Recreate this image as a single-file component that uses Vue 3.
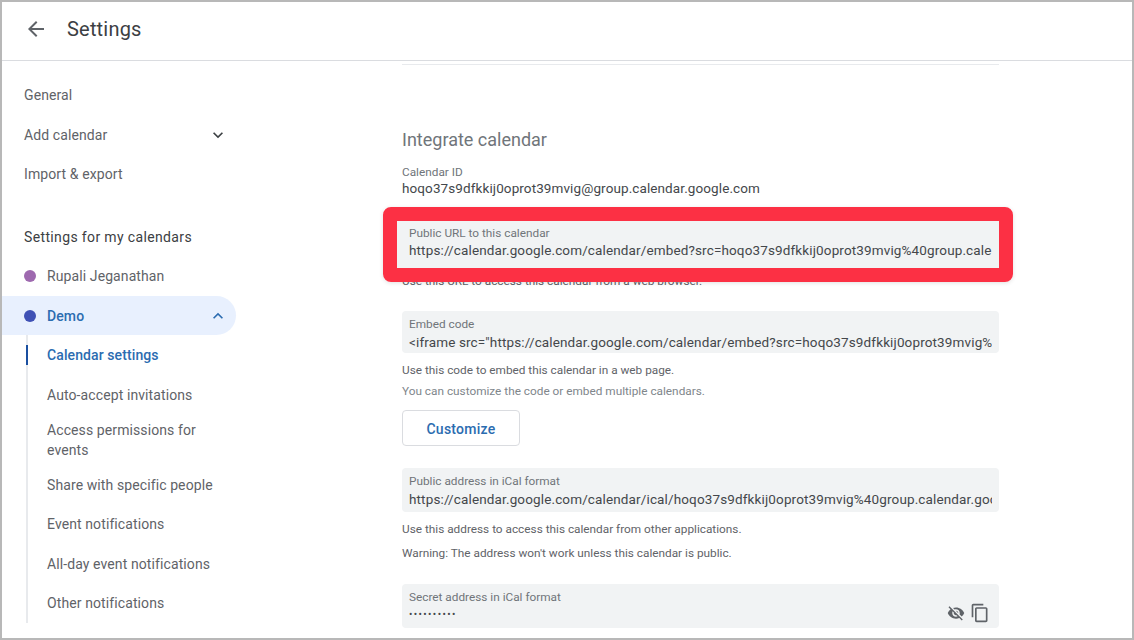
<script setup>
const topNav = ['General', 'Add calendar', 'Import & export']
const subNav = [
  { label: 'Calendar settings', active: true },
  { label: 'Auto-accept invitations' },
  { label: 'Access permissions for events', tall: true },
  { label: 'Share with specific people' },
  { label: 'Event notifications' },
  { label: 'All-day event notifications' },
  { label: 'Other notifications' }
]
</script>

<template>
  <div class="frame">
    <header class="bar">
      <svg class="back" width="24" height="24" viewBox="0 0 24 24" fill="#5f6368"><path d="M20 11H7.83l5.59-5.59L12 4l-8 8 8 8 1.41-1.41L7.83 13H20v-2z"/></svg>
      <h1>Settings</h1>
    </header>
    <div class="body">
      <nav class="side">
        <div v-for="item in topNav" :key="item" class="item">
          <span>{{ item }}</span>
          <svg v-if="item === 'Add calendar'" class="chev" width="20" height="20" viewBox="0 0 24 24" fill="#3c4043"><path d="M7.41 8.59 12 13.17l4.59-4.58L18 10l-6 6-6-6z"/></svg>
        </div>
        <div class="item head">Settings for my calendars</div>
        <div class="item"><i class="dot purple"></i><span>Rupali Jeganathan</span></div>
        <div class="item demo">
          <i class="dot blue"></i><span>Demo</span>
          <svg class="chev" width="20" height="20" viewBox="0 0 24 24" fill="#2b6cb0"><path d="M7.41 15.41 12 10.83l4.59 4.58L18 14l-6-6-6 6z"/></svg>
        </div>
        <div class="sub">
          <div v-for="s in subNav" :key="s.label" class="subitem" :class="{ active: s.active, tall: s.tall }">{{ s.label }}</div>
        </div>
      </nav>
      <main class="main">
        <div class="rule"></div>
        <h2>Integrate calendar</h2>
        <div class="plain">
          <div class="label">Calendar ID</div>
          <div class="value">hoqo37s9dfkkij0oprot39mvig@group.calendar.google.com</div>
        </div>
        <div class="field url">
          <div class="label">Public URL to this calendar</div>
          <div class="value clip">https://calendar.google.com/calendar/embed?src=hoqo37s9dfkkij0oprot39mvig%40group.cale</div>
        </div>
        <p class="help first">Use this URL to access this calendar from a web browser.</p>
        <div class="field embed">
          <div class="label">Embed code</div>
          <div class="value clip">&lt;iframe src="https://calendar.google.com/calendar/embed?src=hoqo37s9dfkkij0oprot39mvig%</div>
        </div>
        <p class="help use">Use this code to embed this calendar in a web page.</p>
        <p class="help muted">You can customize the code or embed multiple calendars.</p>
        <button class="btn">Customize</button>
        <div class="field ical">
          <div class="label">Public address in iCal format</div>
          <div class="value clip">https://calendar.google.com/calendar/ical/hoqo37s9dfkkij0oprot39mvig%40group.calendar.goo</div>
        </div>
        <p class="help use">Use this address to access this calendar from other applications.</p>
        <p class="help warn">Warning: The address won't work unless this calendar is public.</p>
        <div class="field secret">
          <div class="label">Secret address in iCal format</div>
          <div class="value dots">••••••••••</div>
          <div class="tools">
            <svg width="18" height="18" viewBox="0 0 24 24" fill="#5f6368"><path d="M12 7c2.76 0 5 2.24 5 5 0 .65-.13 1.26-.36 1.83l2.92 2.92c1.51-1.26 2.7-2.89 3.43-4.75-1.73-4.39-6-7.5-11-7.5-1.4 0-2.74.25-3.98.7l2.16 2.16C10.74 7.13 11.35 7 12 7zM2 4.270l2.280 2.280.46.46C3.080 8.300 1.780 10.020 1 12c1.730 4.390 6 7.500 11 7.500 1.550 0 3.030-.3 4.380-.84l.42.42L19.730 22 21 20.730 3.270 3 2 4.270zM7.530 9.800l1.550 1.550c-.05.21-.08.43-.08.65 0 1.660 1.340 3 3 3 .22 0 .44-.03.65-.08l1.550 1.550c-.67.33-1.410.53-2.200.53-2.760 0-5-2.240-5-5 0-.79.2-1.530.53-2.200zm4.310-.78l3.150 3.150.02-.16c0-1.660-1.340-3-3-3l-.17.01z"/></svg>
            <svg width="20" height="20" viewBox="0 0 24 24" fill="#5f6368"><path d="M16 1H4c-1.100 0-2 .9-2 2v14h2V3h12V1zm3 4H8c-1.100 0-2 .9-2 2v14c0 1.100.9 2 2 2h11c1.100 0 2-.9 2-2V7c0-1.100-.9-2-2-2zm0 16H8V7h11v14z"/></svg>
          </div>
        </div>
      </main>
    </div>
    <div class="highlight"></div>
  </div>
</template>

<style>
html, body { margin: 0; background: #fff; }
</style>

<style scoped>
.frame { position: relative; box-sizing: border-box; width: 1134px; height: 640px; border: 2px solid #b8b8b8; overflow: hidden; display: flex; flex-direction: column; background: #fff; font-family: Roboto, "Liberation Sans", sans-serif; color: #5f6368; }
.bar { flex: none; box-sizing: border-box; height: 59px; border-bottom: 1px solid #dadce0; display: flex; align-items: center; padding: 0 0 4px 22px; }
.back { flex: none; }
h1 { margin: 0 0 0 19px; font: 400 20px Roboto, sans-serif; color: #3c4043; letter-spacing: .2px; }
.body { flex: 1; display: flex; min-height: 0; }
.side { flex: none; width: 400px; padding-top: 14.6px; box-sizing: border-box; font-size: 14px; letter-spacing: .1px; }
.item { box-sizing: border-box; height: 39.4px; width: 234px; display: flex; align-items: center; padding-left: 22px; position: relative; }
.head { margin-top: 23.5px; color: #3c4043; letter-spacing: .36px; }
.dot { flex: none; width: 12px; height: 12px; border-radius: 50%; margin-right: 11px; }
.purple { background: #9e69af; }
.blue { background: #3f51b5; }
.chev { position: absolute; right: 8px; top: 10px; }
.demo { background: #e8f0fe; border-radius: 0 20px 20px 0; color: #2b6cb0; font-weight: 500; }
.sub { margin-left: 24px; border-left: 2px solid #e8eaed; padding-left: 19px; width: 190px; }
.subitem { box-sizing: border-box; min-height: 39.4px; display: flex; align-items: center; line-height: 20px; position: relative; }
.tall { padding: 5.5px 0; }
.active { color: #2b6cb0; font-weight: 500; }
.active::before { content: ""; position: absolute; left: -21px; top: 10px; width: 1.5px; height: 20px; background: #1a4fa0; }
.main { flex: none; width: 597px; }
.rule { height: 1px; background: #e8eaed; margin-top: 3px; }
h2 { margin: 62.5px 0 0; font: 400 18px/24px Roboto, sans-serif; color: #70757a; }
.plain { margin-top: 12.5px; }
.plain .value { margin-top: -1.5px; }
.label { font-size: 11.8px; line-height: 16px; color: #70757a; }
.value { font-size: 13.5px; line-height: 18px; color: #44474b; letter-spacing: .1px; white-space: nowrap; }
.clip { overflow: hidden; }
.field { position: relative; background: #f1f3f4; border-radius: 4px; padding: 5px 7px 0; box-sizing: border-box; }
.field .value { margin-top: .5px; letter-spacing: .135px; }
.url { margin-top: 24.5px; height: 47px; padding-top: 3.5px; margin-left: -5px; padding-left: 12px; border-radius: 0; }
.help { margin: 0; font-size: 11.8px; line-height: 18px; color: #5f6368; }
.first { margin-top: 4px; }
.embed { margin-top: 21px; height: 42px; }
.use { margin-top: 8px; }
.muted { color: #80868b; margin-top: 3px; }
.btn { display: block; margin-top: 10px; width: 118px; height: 36px; padding: 1px 0 0; background: #fff; border: 1px solid #dadce0; border-radius: 4px; font: 500 14px Roboto, sans-serif; color: #2b6cb0; letter-spacing: .25px; }
.ical { margin-top: 22px; height: 44px; }
.warn { margin-top: 6px; }
.secret { margin-top: 22px; height: 44px; }
.field .dots { font-size: 10px; line-height: 16px; letter-spacing: 1.4px; margin-top: 2px; }
.tools { position: absolute; right: 9px; bottom: 5px; height: 20px; display: flex; align-items: center; gap: 5px; }
.highlight { position: absolute; left: 381px; top: 205px; width: 630px; height: 75px; box-sizing: border-box; border: 14px solid #fc3044; border-radius: 8px; box-shadow: 0 1px 4px rgba(0,0,0,.12); pointer-events: none; }
</style>
